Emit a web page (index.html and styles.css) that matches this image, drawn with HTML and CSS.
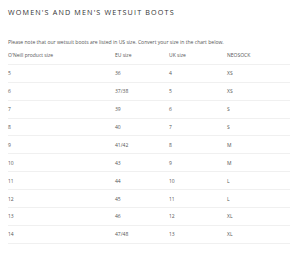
FILE: index.html
```html
<!DOCTYPE html>
<html lang="en">
<head>
    <meta charset="UTF-8">
    <meta name="viewport" content="width=device-width, initial-scale=1.0">
    <title>Wetsuit Boots Size Chart</title>
    <link rel="stylesheet" href="styles.css">
</head>
<body>
    <div class="size-chart">
        <h2 class="chart-title">WOMEN'S AND MEN'S WETSUIT BOOTS</h2>

        <p class="chart-note">Please note that our wetsuit boots are listed in US size. Convert your size in the chart below.</p>

        <!-- Size table -->
        <table class="size-table">
            <thead>
                <tr>
                    <th class="col-product">O'Neill product size</th>
                    <th class="col-eu">EU size</th>
                    <th class="col-uk">UK size</th>
                    <th>NEOSOCK</th>
                </tr>
            </thead>
            <tbody>
                <tr><td>5</td><td>36</td><td>4</td><td>XS</td></tr>
                <tr><td>6</td><td>37/38</td><td>5</td><td>XS</td></tr>
                <tr><td>7</td><td>39</td><td>6</td><td>S</td></tr>
                <tr><td>8</td><td>40</td><td>7</td><td>S</td></tr>
                <tr><td>9</td><td>41/42</td><td>8</td><td>M</td></tr>
                <tr><td>10</td><td>43</td><td>9</td><td>M</td></tr>
                <tr><td>11</td><td>44</td><td>10</td><td>L</td></tr>
                <tr><td>12</td><td>45</td><td>11</td><td>L</td></tr>
                <tr><td>13</td><td>46</td><td>12</td><td>XL</td></tr>
                <tr><td>14</td><td>47/48</td><td>13</td><td>XL</td></tr>
            </tbody>
        </table>
    </div>
</body>
</html>
```

FILE: styles.css
```css
/* General body styling */
body {
    font-family: 'Open Sans', 'Liberation Sans', sans-serif;
    margin: 0;
    padding: 0;
    background: #fff;
    color: #555;
}

/* Chart wrapper */
.size-chart {
    padding: 8px 10px 0 8px;
}

/* Heading */
.chart-title {
    margin: 0;
    font-size: 7.2px;
    font-weight: 400;
    letter-spacing: 1.15px;
    line-height: 9px;
    color: #333;
}

/* Intro text */
.chart-note {
    margin: 22px 0 0;
    font-size: 5.05px;
    line-height: 7px;
}

/* Table */
.size-table {
    width: 100%;
    border-collapse: collapse;
    margin-top: 1px;
    font-size: 5px;
}

.size-table th,
.size-table td {
    height: 16.9px;
    padding: 0;
    text-align: left;
    font-weight: 400;
    vertical-align: middle;
    border-bottom: 1px solid #f0f0f0;
}

.col-product {
    width: 107px;
}

.col-eu {
    width: 54px;
}

.col-uk {
    width: 58px;
}
```
